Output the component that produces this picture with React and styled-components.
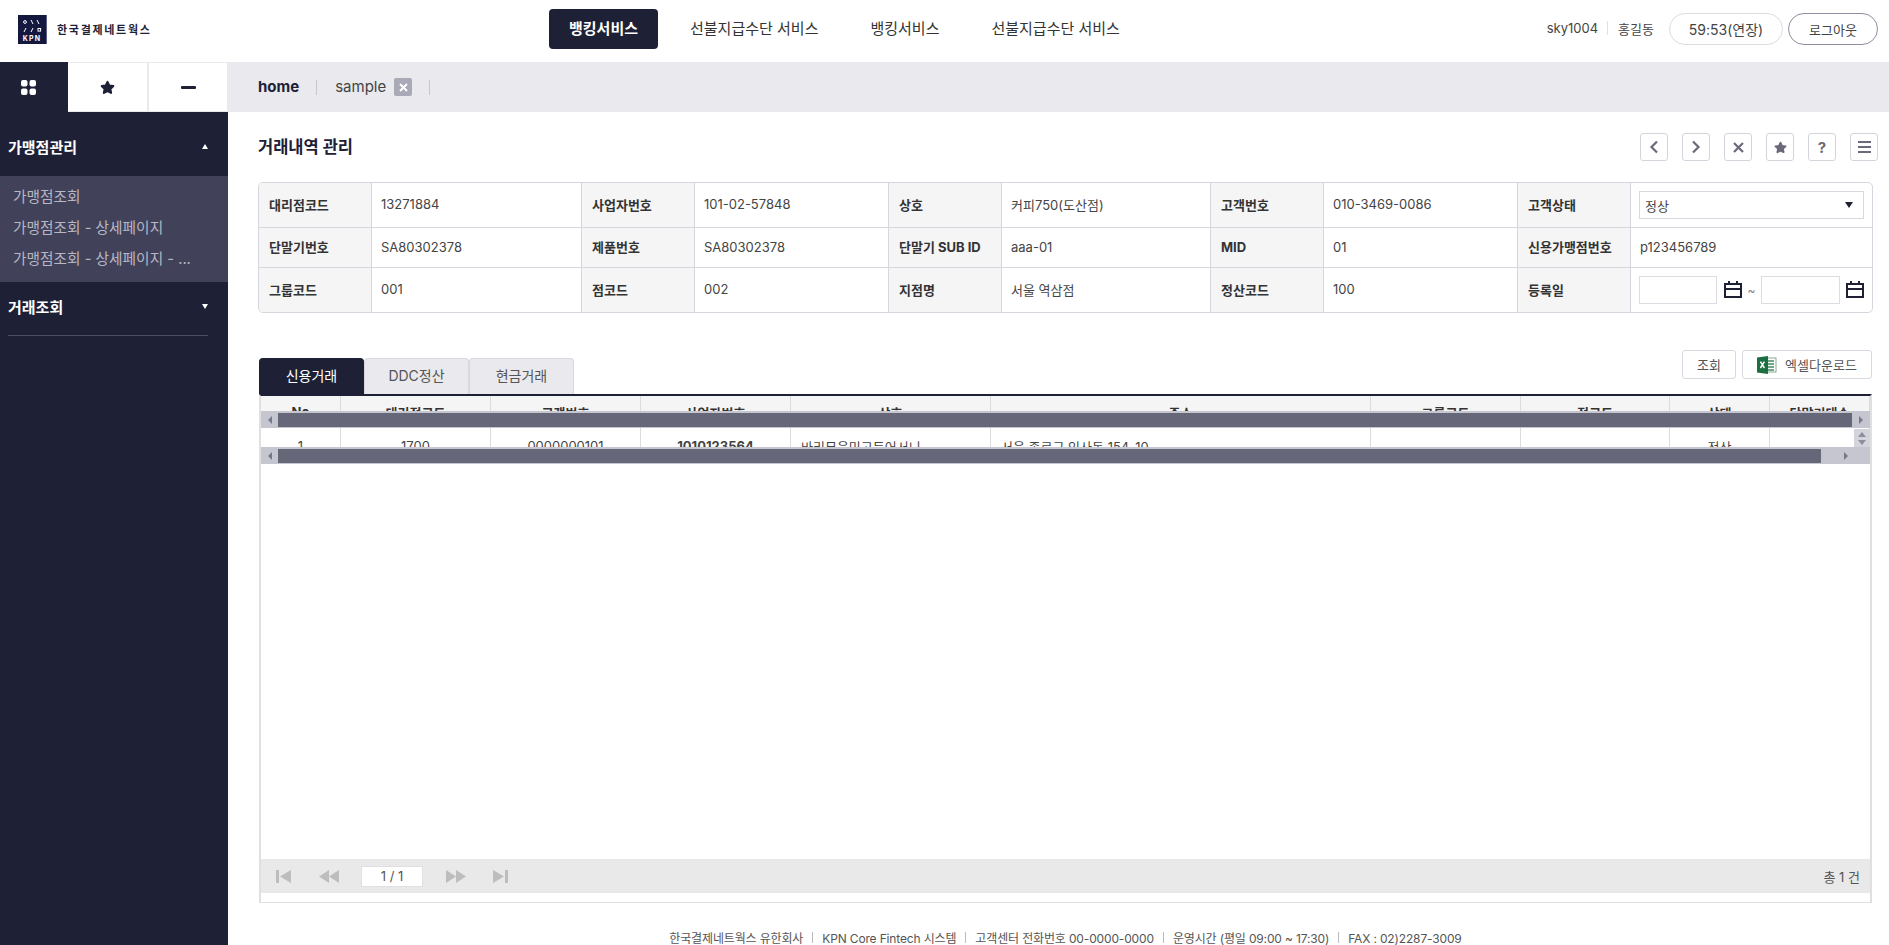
import React from "react";
import styled, { createGlobalStyle } from "styled-components";

const GlobalStyle = createGlobalStyle`
  html, body {
    margin: 0;
    height: 100%;
    overflow: hidden;
    background: #fff;
  }
  body {
    font-family: "Inter", "Noto Sans CJK KR", sans-serif;
    font-size: 13px;
    color: #444;
  }
  * {
    box-sizing: border-box;
  }
`;

const Page = styled.div`
  display: flex;
  flex-direction: column;
  width: 100%;
  height: 945px;
  overflow: hidden;
`;

const Header = styled.header`
  display: flex;
  align-items: center;
  height: 62px;
  flex: none;
  padding: 0 11px 0 18px;
`;

const Logo = styled.div`
  display: flex;
  align-items: center;
  gap: 10px;
  width: 531px;
  padding-bottom: 4px;
`;

const LogoName = styled.span`
  font-size: 11px;
  font-weight: 700;
  letter-spacing: 1.7px;
  color: #1e2136;
`;

const Nav = styled.nav`
  display: flex;
  align-items: center;
  gap: 12px;
  padding-bottom: 4px;
`;

const NavItem = styled.a`
  display: flex;
  align-items: center;
  justify-content: center;
  height: 40px;
  padding: 0 20px 3px;
  border-radius: 4px;
  font-size: 15px;
  font-weight: ${({ $active }) => ($active ? 700 : 400)};
  color: ${({ $active }) => ($active ? "#fff" : "#333")};
  background: ${({ $active }) => ($active ? "#1e2136" : "transparent")};
`;

const UserBox = styled.div`
  display: flex;
  align-items: center;
  margin-left: auto;
  padding-bottom: 4px;
  font-size: 13px;
  color: #444;
`;

const UserName = styled.span`
  padding-right: 9px;
  margin-bottom: 2px;
  border-right: 1px solid #e2e2e6;
  line-height: 14px;
`;

const UserReal = styled.span`
  padding: 0 15px 2px 10px;
`;

const Pill = styled.button`
  height: 32px;
  width: ${({ $w }) => $w}px;
  margin-left: ${({ $ml }) => $ml || 0}px;
  border-radius: 16px;
  border: 1px solid ${({ $dark }) => ($dark ? "#8f8f9f" : "#dcdce2")};
  background: #fff;
  font-family: inherit;
  font-size: ${({ $fs }) => $fs || 13}px;
  color: #444;
  padding: 0;
`;

const Body = styled.div`
  display: flex;
  flex: 1;
  min-height: 0;
`;

const Sidebar = styled.aside`
  width: 228px;
  flex: none;
  background: #1e2136;
`;

const SideTools = styled.div`
  display: flex;
  height: 50px;
  background: #e9e9ee;
`;

const SideTool = styled.div`
  display: flex;
  align-items: center;
  justify-content: center;
  width: ${({ $w }) => $w}px;
  margin-right: ${({ $mr }) => $mr || 0}px;
  margin-top: ${({ $dark }) => ($dark ? 0 : 1)}px;
  margin-bottom: ${({ $dark }) => ($dark ? 0 : 1)}px;
  padding-right: ${({ $dark }) => ($dark ? 12 : 0)}px;
  background: ${({ $dark }) => ($dark ? "#1e2136" : "#fff")};
`;

const MenuHead = styled.div`
  display: flex;
  align-items: center;
  justify-content: space-between;
  height: ${({ $h }) => $h}px;
  padding: ${({ $pt }) => $pt || 0}px 20px ${({ $pb }) => $pb || 0}px 8px;
  font-size: 15px;
  font-weight: 700;
  color: #fff;
`;

const Caret = styled.span`
  width: 0;
  height: 0;
  border-left: 3px solid transparent;
  border-right: 3px solid transparent;
  border-${({ $up }) => ($up ? "bottom" : "top")}: 5px solid #fff;
`;

const SubMenu = styled.ul`
  list-style: none;
  margin: 0;
  padding: 6px 0 7px;
  background: #41425a;
`;

const SubItem = styled.li`
  height: 31px;
  line-height: 31px;
  padding: 0 13px;
  font-size: 14.7px;
  color: #b7b7c5;
  white-space: nowrap;
`;

const SideLine = styled.div`
  height: 1px;
  margin: 0 20px 0 8px;
  background: #4a4c62;
`;

const Main = styled.main`
  flex: 1;
  min-width: 0;
  display: flex;
  flex-direction: column;
`;

const TabBar = styled.div`
  display: flex;
  align-items: center;
  height: 50px;
  flex: none;
  padding-left: 30px;
  background: #e9e9ee;
  font-size: 15px;
  color: #444;
`;

const PageTab = styled.span`
  display: flex;
  align-items: center;
  gap: 8px;
  height: 15px;
  line-height: 12px;
  padding-right: ${({ $pr }) => $pr}px;
  margin-right: ${({ $mr }) => $mr || 0}px;
  border-right: 1px solid #c8c8d0;
  font-weight: ${({ $active }) => ($active ? 700 : 400)};
  color: ${({ $active }) => ($active ? "#1e2136" : "#444")};
`;

const TabClose = styled.span`
  display: flex;
  align-items: center;
  justify-content: center;
  width: 18px;
  height: 18px;
  border-radius: 2px;
  background: #a9a9b7;
`;

const Content = styled.div`
  width: 1615px;
  margin-left: 30px;
  display: flex;
  flex-direction: column;
`;

const TitleRow = styled.div`
  display: flex;
  align-items: center;
  justify-content: space-between;
  height: 28px;
  margin: 21px 0;
`;

const Title = styled.h2`
  margin: 0 0 2px;
  font-size: 16.5px;
  font-weight: 700;
  color: #1e2136;
`;

const IconButtons = styled.div`
  display: flex;
  gap: 14px;
  margin-right: -5px;
`;

const IconButton = styled.button`
  display: flex;
  align-items: center;
  justify-content: center;
  width: 28px;
  height: 28px;
  padding: 0;
  background: #fff;
  border: 1px solid #d4d4dc;
  border-radius: 3px;
  font: 700 15px "Inter", sans-serif;
  color: #6a6a7a;
`;

const InfoGrid = styled.div`
  display: grid;
  grid-template-columns: 113px 210px 113px 194px 113px 209px 113px 194px 113px 241px;
  grid-template-rows: 45px 40px 44px;
  border: 1px solid #d6d6de;
  border-radius: 5px;
  overflow: hidden;
`;

const InfoCell = styled.div`
  display: flex;
  align-items: center;
  border-right: 1px solid #d6d6de;
  border-bottom: 1px solid #d6d6de;
  &:nth-child(10n) {
    border-right: 0;
  }
  &:nth-last-child(-n + 10) {
    border-bottom: 0;
  }
`;

const InfoLabel = styled(InfoCell)`
  padding: 0 0 2px 10px;
  background: #f5f5f6;
  font-weight: 700;
  color: #333;
  white-space: nowrap;
`;

const InfoValue = styled(InfoCell)`
  padding: 0 0 2px 9px;
  color: #444;
`;

const ControlCell = styled(InfoCell)`
  padding-left: 8px;
`;

const Select = styled.div`
  display: flex;
  align-items: center;
  justify-content: space-between;
  width: 225px;
  height: 28px;
  padding: 0 10px 0 5px;
  border: 1px solid #d8d8e0;
  font-size: 13px;
  color: #444;
`;

const SelectArrow = styled.span`
  width: 0;
  height: 0;
  border-left: 4.5px solid transparent;
  border-right: 4.5px solid transparent;
  border-top: 6px solid #1e2136;
`;

const DateRange = styled.div`
  display: flex;
  align-items: center;
`;

const DateInput = styled.div`
  width: ${({ $w }) => $w}px;
  height: 28px;
  margin-right: ${({ $mr }) => $mr}px;
  border: 1px solid #dcdce2;
`;

const Tilde = styled.span`
  width: 19px;
  text-align: center;
  font-size: 12px;
  color: #888;
`;

const ListHead = styled.div`
  display: flex;
  justify-content: space-between;
  height: 44px;
  margin: 37px 1px 0;
`;

const TabList = styled.div`
  display: flex;
  align-items: flex-end;
`;

const ListTab = styled.div`
  display: flex;
  align-items: center;
  justify-content: center;
  width: 105px;
  height: 36px;
  padding-bottom: 3px;
  border: 1px solid ${({ $active }) => ($active ? "#1e2136" : "#d8d8de")};
  border-bottom: 0;
  border-radius: 4px 4px 0 0;
  font-size: 14px;
  color: ${({ $active }) => ($active ? "#fff" : "#555")};
  background: ${({ $active }) => ($active ? "#1e2136" : "#e9e9ee")};
`;

const ListActions = styled.div`
  display: flex;
  gap: 6px;
`;

const ActionButton = styled.button`
  display: flex;
  align-items: center;
  justify-content: center;
  gap: 8px;
  width: ${({ $w }) => $w}px;
  height: 29px;
  padding: 0;
  background: #fff;
  border: 1px solid #d8d8e0;
  border-radius: 3px;
  font: inherit;
  color: #555;
`;

const DataGrid = styled.section`
  display: flex;
  flex-direction: column;
  height: 509px;
  margin: 0 1px;
  border: 2px solid #e0e0e0;
  border-top: 2px solid #1e2136;
  border-bottom-width: 1px;
`;

const GridRow = styled.div`
  position: relative;
  display: grid;
  grid-template-columns: 80px 150px 150px 150px 200px 380px 150px 149px 100px 100px;
  height: ${({ $h }) => $h}px;
  flex: none;
  overflow: hidden;
  background: ${({ $head }) => ($head ? "#f5f5f6" : "#fff")};
  font-weight: ${({ $head }) => ($head ? 700 : 400)};
  color: ${({ $head }) => ($head ? "#333" : "#444")};
`;

const GridCell = styled.div`
  display: flex;
  align-items: center;
  justify-content: ${({ $left }) => ($left ? "flex-start" : "center")};
  padding-left: ${({ $left }) => ($left ? 10 : 0)}px;
  border-right: 1px solid #dcdce0;
  white-space: nowrap;
  font-weight: ${({ $bold }) => ($bold ? 700 : "inherit")};
  &:last-of-type {
    border-right: 0;
  }
`;

const ScrollBar = styled.div`
  position: absolute;
  left: 0;
  right: 0;
  bottom: 0;
  display: flex;
  align-items: center;
  height: 17px;
  background: #c6c6d1;
`;

const ScrollThumb = styled.div`
  flex: 1;
  height: 14px;
  background: #666778;
`;

const ScrollEnd = styled.div`
  display: flex;
  align-items: center;
  justify-content: center;
  width: ${({ $w }) => $w}px;
  flex: none;
`;

const ScrollTri = styled.span`
  width: 0;
  height: 0;
  border-top: 4px solid transparent;
  border-bottom: 4px solid transparent;
  border-${({ $left }) => ($left ? "right" : "left")}: 4px solid #77788a;
`;

const VerticalBar = styled.div`
  position: absolute;
  top: 1px;
  right: 0;
  width: 16px;
  height: 18px;
  display: flex;
  flex-direction: column;
  align-items: center;
  justify-content: center;
  gap: 3px;
  background: #d4d4dd;
`;

const VerticalTri = styled.span`
  width: 0;
  height: 0;
  border-left: 4px solid transparent;
  border-right: 4px solid transparent;
  border-${({ $up }) => ($up ? "bottom" : "top")}: 5px solid #8d8d9c;
`;

const GridSpace = styled.div`
  flex: 1;
`;

const Pager = styled.div`
  display: flex;
  align-items: center;
  height: 34px;
  flex: none;
  margin-bottom: 9px;
  padding: 0 10px 0 15px;
  background: #e9e9e9;
  color: #555;
`;

const PagerIcon = styled.svg`
  display: block;
  flex: none;
  margin-right: ${({ $mr }) => $mr}px;
  fill: #bdbdbd;
`;

const PageInput = styled.div`
  width: 62px;
  height: 21px;
  margin-right: 23px;
  line-height: 19px;
  text-align: center;
  background: #fff;
  border: 1px solid #e0e0e0;
`;

const PagerTotal = styled.span`
  margin-left: auto;
`;

const Footer = styled.footer`
  margin-top: 28px;
  line-height: 16px;
  text-align: center;
  font-size: 12px;
  letter-spacing: -0.15px;
  color: #555;
  white-space: nowrap;
`;

const FootSep = styled.span`
  display: inline-block;
  width: 1px;
  height: 11px;
  margin: 0 9px;
  background: #bbb;
`;

function CalendarIcon() {
  return (
    <svg width="18" height="18" viewBox="0 0 18 18" fill="none" stroke="#1e2136" strokeWidth="2">
      <rect x="1" y="3" width="16" height="13" />
      <path d="M1 8h16M5 0v4M13 0v4" />
    </svg>
  );
}

function ExcelIcon() {
  return (
    <svg width="20" height="18" viewBox="0 0 20 18">
      <rect x="8" y="2" width="11" height="14" fill="#fff" stroke="#8aa896" />
      <path d="M11 5h6M11 8h6M11 11h6M11 14h6" stroke="#3f8a5e" strokeWidth="1.4" />
      <path d="M0 1.5 11 0v18L0 16.5z" fill="#1d6f42" />
      <path d="M3.4 5.6 7.4 12M7.4 5.6 3.4 12" stroke="#fff" strokeWidth="1.5" />
    </svg>
  );
}

function LogoMark() {
  return (
    <svg width="29" height="29" viewBox="0 0 29 29">
      <rect width="29" height="29" fill="#14183f" />
      <rect x="28" width="1" height="29" fill="#5a5e80" />
      <g stroke="#fff" strokeWidth="1" fill="none">
        <circle cx="7" cy="7" r="1.4" />
        <path d="M13 5l2 4M19 5l2 4M6 17l2-4M13 17l2-4" />
        <rect x="20" y="13.5" width="2.6" height="2.6" />
      </g>
      <text x="14" y="26" textAnchor="middle" fontSize="7" fontWeight="700" letterSpacing="1.2" fill="#fff" fontFamily="Inter, sans-serif">
        KPN
      </text>
    </svg>
  );
}

function StarIcon({ color, size = 15 }) {
  return (
    <svg width={size} height={size} viewBox="0 0 16 16">
      <path
        d="M8 2l1.9 3.9 4.3.6-3.1 3 .7 4.3L8 11.8l-3.8 2 .7-4.3-3.1-3 4.3-.6z"
        fill={color}
        stroke={color}
        strokeWidth="2.2"
        strokeLinejoin="round"
      />
    </svg>
  );
}

function PagerButton({ d, width, mr }) {
  return (
    <PagerIcon $mr={mr} width={width} height="13" viewBox={`0 0 ${width} 13`}>
      <path d={d} />
    </PagerIcon>
  );
}

const infoRows = [
  ["대리점코드", "13271884", "사업자번호", "101-02-57848", "상호", "커피750(도산점)", "고객번호", "010-3469-0086", "고객상태"],
  ["단말기번호", "SA80302378", "제품번호", "SA80302378", "단말기 SUB ID", "aaa-01", "MID", "01", "신용가맹점번호"],
  ["그룹코드", "001", "점코드", "002", "지점명", "서울 역삼점", "정산코드", "100", "등록일"],
];

const gridHead = ["No", "대리점코드", "고객번호", "사업자번호", "상호", "주소", "그룹코드", "점코드", "상태", "단말기대수"];

export default function App() {
  return (
    <Page>
      <GlobalStyle />
      <Header>
        <Logo>
          <LogoMark />
          <LogoName>한국결제네트웍스</LogoName>
        </Logo>
        <Nav>
          <NavItem $active>뱅킹서비스</NavItem>
          <NavItem>선불지급수단 서비스</NavItem>
          <NavItem>뱅킹서비스</NavItem>
          <NavItem>선불지급수단 서비스</NavItem>
        </Nav>
        <UserBox>
          <UserName>sky1004</UserName>
          <UserReal>홍길동</UserReal>
          <Pill $w={114} $fs={14}>59:53(연장)</Pill>
          <Pill $w={90} $ml={5} $dark>
            로그아웃
          </Pill>
        </UserBox>
      </Header>
      <Body>
        <Sidebar>
          <SideTools>
            <SideTool $dark $w={68}>
              <svg width="15" height="15" viewBox="0 0 15 15" fill="#fff">
                <rect width="6.5" height="6.5" rx="2" />
                <rect x="8.5" width="6.5" height="6.5" rx="2" />
                <rect y="8.5" width="6.5" height="6.5" rx="2" />
                <rect x="8.5" y="8.5" width="6.5" height="6.5" rx="2" />
              </svg>
            </SideTool>
            <SideTool $w={79} $mr={2}>
              <StarIcon color="#1e2136" />
            </SideTool>
            <SideTool $w={78}>
              <svg width="15" height="3" viewBox="0 0 15 3">
                <rect width="15" height="3" rx="1" fill="#1e2136" />
              </svg>
            </SideTool>
          </SideTools>
          <MenuHead $h={64} $pt={5}>
            가맹점관리
            <Caret $up />
          </MenuHead>
          <SubMenu>
            <SubItem>가맹점조회</SubItem>
            <SubItem>가맹점조회 - 상세페이지</SubItem>
            <SubItem>가맹점조회 - 상세페이지 - ...</SubItem>
          </SubMenu>
          <MenuHead $h={53} $pb={4}>
            거래조회
            <Caret />
          </MenuHead>
          <SideLine />
        </Sidebar>
        <Main>
          <TabBar>
            <PageTab $active $pr={17} $mr={18}>
              home
            </PageTab>
            <PageTab $pr={17}>
              sample
              <TabClose>
                <svg width="9" height="9" viewBox="0 0 9 9" stroke="#fff" strokeWidth="2">
                  <path d="M1 1l7 7M8 1L1 8" />
                </svg>
              </TabClose>
            </PageTab>
          </TabBar>
          <Content>
            <TitleRow>
              <Title>거래내역 관리</Title>
              <IconButtons>
                <IconButton aria-label="이전">
                  <svg width="10" height="14" viewBox="0 0 10 14" fill="none" stroke="#6a6a7a" strokeWidth="2.2">
                    <path d="M8 1.5 2.5 7 8 12.5" />
                  </svg>
                </IconButton>
                <IconButton aria-label="다음">
                  <svg width="10" height="14" viewBox="0 0 10 14" fill="none" stroke="#6a6a7a" strokeWidth="2.2">
                    <path d="M2 1.5 7.5 7 2 12.5" />
                  </svg>
                </IconButton>
                <IconButton aria-label="닫기">
                  <svg width="11" height="11" viewBox="0 0 11 11" fill="none" stroke="#6a6a7a" strokeWidth="2.2">
                    <path d="M1 1l9 9M10 1l-9 9" />
                  </svg>
                </IconButton>
                <IconButton aria-label="즐겨찾기">
                  <StarIcon color="#6a6a7a" size={13} />
                </IconButton>
                <IconButton>?</IconButton>
                <IconButton aria-label="메뉴">
                  <svg width="13" height="12" viewBox="0 0 13 12" fill="#6a6a7a">
                    <rect width="13" height="2" />
                    <rect y="5" width="13" height="2" />
                    <rect y="10" width="13" height="2" />
                  </svg>
                </IconButton>
              </IconButtons>
            </TitleRow>

            <InfoGrid>
              {infoRows.map((row, r) => (
                <React.Fragment key={r}>
                  {row.map((text, i) =>
                    i % 2 === 0 ? (
                      <InfoLabel key={i}>{text}</InfoLabel>
                    ) : (
                      <InfoValue key={i}>{text}</InfoValue>
                    )
                  )}
                  {r === 0 && (
                    <ControlCell>
                      <Select>
                        정상
                        <SelectArrow />
                      </Select>
                    </ControlCell>
                  )}
                  {r === 1 && <InfoValue>p123456789</InfoValue>}
                  {r === 2 && (
                    <ControlCell>
                      <DateRange>
                        <DateInput $w={78} $mr={7} />
                        <CalendarIcon />
                        <Tilde>~</Tilde>
                        <DateInput $w={79} $mr={6} />
                        <CalendarIcon />
                      </DateRange>
                    </ControlCell>
                  )}
                </React.Fragment>
              ))}
            </InfoGrid>

            <ListHead>
              <TabList>
                <ListTab $active>신용거래</ListTab>
                <ListTab>DDC정산</ListTab>
                <ListTab>현금거래</ListTab>
              </TabList>
              <ListActions>
                <ActionButton $w={54}>조회</ActionButton>
                <ActionButton $w={130}>
                  <ExcelIcon />
                  엑셀다운로드
                </ActionButton>
              </ListActions>
            </ListHead>

            <DataGrid>
              <GridRow $head $h={32}>
                {gridHead.map((text) => (
                  <GridCell key={text}>{text}</GridCell>
                ))}
                <ScrollBar>
                  <ScrollEnd $w={17}>
                    <ScrollTri $left />
                  </ScrollEnd>
                  <ScrollThumb />
                  <ScrollEnd $w={18}>
                    <ScrollTri />
                  </ScrollEnd>
                </ScrollBar>
              </GridRow>
              <GridRow $h={36}>
                <GridCell>1</GridCell>
                <GridCell>1700</GridCell>
                <GridCell>0000000101</GridCell>
                <GridCell $bold>1010123564</GridCell>
                <GridCell $left>바리뮤음민고등어서니</GridCell>
                <GridCell $left>서울 종로구 익사동 154-10</GridCell>
                <GridCell />
                <GridCell />
                <GridCell>정상</GridCell>
                <GridCell />
                <VerticalBar>
                  <VerticalTri $up />
                  <VerticalTri />
                </VerticalBar>
                <ScrollBar>
                  <ScrollEnd $w={17}>
                    <ScrollTri $left />
                  </ScrollEnd>
                  <ScrollThumb />
                  <ScrollEnd $w={49}>
                    <ScrollTri />
                  </ScrollEnd>
                </ScrollBar>
              </GridRow>
              <GridSpace />
              <Pager>
                <PagerButton width={15} mr={28} d="M0 0h3v13H0zM15 0v13L4 6.5z" />
                <PagerButton width={20} mr={22} d="M10 0v13L0 6.5zM20 0v13L10 6.5z" />
                <PageInput>1 / 1</PageInput>
                <PagerButton width={20} mr={27} d="M0 0l10 6.5L0 13zM10 0l10 6.5L10 13z" />
                <PagerButton width={15} mr={0} d="M0 0l11 6.5L0 13zM12 0h3v13h-3z" />
                <PagerTotal>총 1 건</PagerTotal>
              </Pager>
            </DataGrid>

            <Footer>
              한국결제네트웍스 유한회사
              <FootSep />
              KPN Core Fintech 시스템
              <FootSep />
              고객센터 전화번호 00-0000-0000
              <FootSep />
              운영시간 (평일 09:00 ~ 17:30)
              <FootSep />
              FAX : 02)2287-3009
            </Footer>
          </Content>
        </Main>
      </Body>
    </Page>
  );
}
